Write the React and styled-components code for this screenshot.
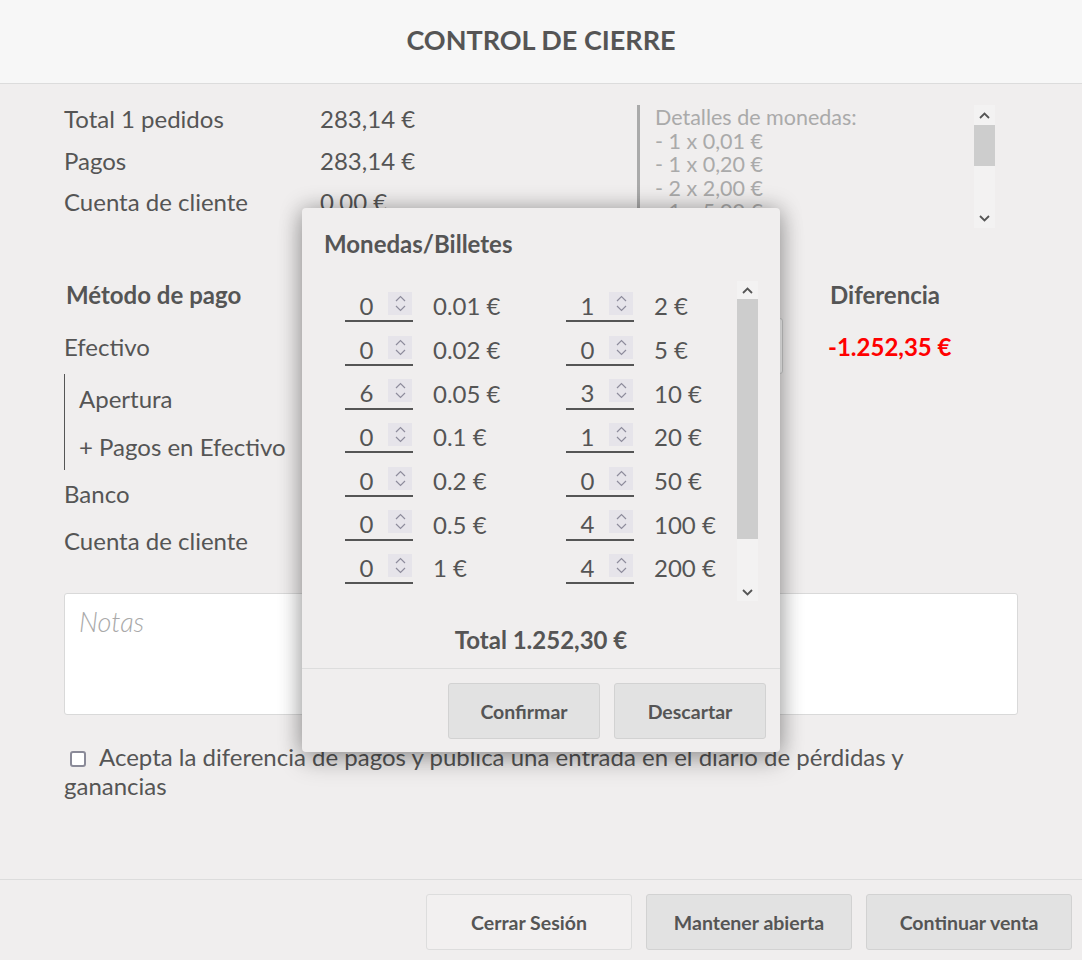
import React from "react";
import styled, { createGlobalStyle } from "styled-components";

const GlobalStyle = createGlobalStyle`
  body {
    margin: 0;
    background-color: #f0eeee;
    font-family: Lato, "Open Sans", sans-serif;
    color: #555555;
  }
`;

const Screen = styled.div`
  position: relative;
  width: 1082px;
  height: 960px;
  display: flex;
  flex-direction: column;
  background-color: #f0eeee;
  overflow: hidden;
`;

const Header = styled.header`
  height: 84px;
  flex-shrink: 0;
  box-sizing: border-box;
  padding-bottom: 4px;
  display: flex;
  align-items: center;
  justify-content: center;
  background-color: #f7f7f7;
  border-bottom: 1px solid #dcdcdc;
`;

const Title = styled.h1`
  margin: 0;
  font-size: 27px;
  font-weight: 700;
  color: #555555;
`;

const Body = styled.main`
  flex: 1;
  padding: 14px 64px 0;
  font-size: 24px;
`;

const Summary = styled.section`
  display: flex;
  justify-content: space-between;
  height: 135px;
`;

const Totals = styled.div`
  display: grid;
  grid-template-columns: 256px 200px;
  grid-auto-rows: 41.5px;
  align-items: center;
`;

const CoinDetails = styled.div`
  display: flex;
  width: 355px;
  height: 123px;
  margin-top: 7px;
  margin-right: 23px;
  border-left: 3px solid #aaaaaa;
`;

const CoinText = styled.div`
  flex: 1;
  overflow: hidden;
  padding: 1px 0 0 15px;
  font-size: 21.5px;
  line-height: 23.5px;
  color: #aaaaaa;
  white-space: nowrap;
`;

const ScrollTrack = styled.div`
  width: 21px;
  flex-shrink: 0;
  display: flex;
  flex-direction: column;
  align-items: center;
  background-color: #f3f2f2;
`;

const ScrollArrow = styled.div`
  height: ${(p) => p.$size}px;
  width: 100%;
  flex-shrink: 0;
  display: flex;
  align-items: center;
  justify-content: center;
`;

const ScrollThumb = styled.div`
  width: 100%;
  height: ${(p) => p.$height}px;
  flex-shrink: 0;
  background-color: #cdcdcd;
`;

const ScrollGap = styled.div`
  flex: 1;
`;

const PaymentTable = styled.div`
  display: grid;
  grid-template-columns: 256px 250px 258px 1fr;
  margin-top: 35px;
`;

const HeadCell = styled.div`
  font-weight: 700;
  height: 52px;
  display: flex;
  align-items: center;
  padding-left: 2px;
`;

const Cell = styled.div`
  height: ${(p) => p.$h || 47}px;
  display: flex;
  align-items: center;
  color: ${(p) => (p.$red ? "#ff0000" : "#555555")};
  font-weight: ${(p) => (p.$red ? 700 : 400)};
`;

const CountInput = styled.div`
  width: 211px;
  height: 54px;
  border: 1px solid #cfcfcf;
  border-radius: 3px;
  background-color: #ffffff;
`;

const CashGroup = styled.div`
  grid-column: 1 / -1;
  display: flex;
  flex-direction: column;
  border-left: 1px solid #555555;
  padding-left: 14px;
  margin-top: 2px;
`;

const SubRow = styled.div`
  height: 48px;
  display: flex;
  align-items: center;
`;

const Notes = styled.textarea`
  display: block;
  box-sizing: border-box;
  width: 954px;
  height: 122px;
  margin-top: 29px;
  padding: 11px 14px;
  resize: none;
  border: 1px solid #d9d9d9;
  border-radius: 3px;
  background-color: #ffffff;
  font-family: Lato, sans-serif;
  font-size: 27px;
  color: #555555;

  &::placeholder {
    color: #a9a9a9;
    font-style: italic;
    font-weight: 300;
  }
`;

const AcceptLabel = styled.label`
  display: block;
  margin-top: 27px;
  width: 880px;
  font-size: 24px;
  line-height: 29px;
`;

const CheckBox = styled.input`
  appearance: none;
  width: 16px;
  height: 16px;
  margin: 0 13px 0 6px;
  vertical-align: -1px;
  border: 2px solid #8a8a98;
  border-radius: 3px;
  background-color: #ffffff;
  box-sizing: border-box;
`;

const Footer = styled.footer`
  height: 81px;
  flex-shrink: 0;
  display: flex;
  justify-content: flex-end;
  gap: 14px;
  padding: 14px 10px 0 0;
  box-sizing: border-box;
  border-top: 1px solid #dcdcdc;
`;

const Button = styled.button`
  width: ${(p) => p.$width}px;
  height: 56px;
  padding: 0;
  border: 1px solid ${(p) => (p.$light ? "#dddddd" : "#d2d2d2")};
  border-radius: 3px;
  background-color: ${(p) => (p.$light ? "#f2f0f0" : "#e2e2e2")};
  font-family: Lato, sans-serif;
  font-size: 19.5px;
  font-weight: 700;
  color: #555555;
`;

const Popup = styled.div`
  position: absolute;
  left: 302px;
  top: 208px;
  width: 478px;
  height: 544px;
  display: flex;
  flex-direction: column;
  background-color: #f0eeee;
  border-radius: 4px;
  box-shadow: 0 0 22px rgba(0, 0, 0, 0.3), 0 10px 26px rgba(0, 0, 0, 0.2);
`;

const PopupTitle = styled.h2`
  margin: 0;
  padding: 21px 22px 0;
  height: 52px;
  font-size: 24px;
  font-weight: 700;
  color: #555555;
`;

const CoinArea = styled.div`
  display: flex;
  height: 320px;
  margin: 0 22px 0 43px;
`;

const CoinGrid = styled.div`
  flex: 1;
  display: grid;
  grid-template-columns: 221px 1fr;
  grid-auto-rows: 43.7px;
  align-content: start;
  padding-top: 3px;
`;

const CoinRow = styled.div`
  display: flex;
  align-items: center;
  gap: 20px;
  font-size: 24px;
`;

const CoinInput = styled.div`
  width: 68px;
  height: 32px;
  display: flex;
  align-items: center;
  box-sizing: border-box;
  border-bottom: 2px solid #555555;
  margin-top: 1px;
`;

const CoinValue = styled.span`
  width: 43px;
  text-align: center;
  font-size: 24px;
`;

const Spinner = styled.span`
  width: 24px;
  height: 23px;
  margin-top: -4px;
  display: flex;
  align-items: center;
  justify-content: center;
  background-color: #e6e4ea;
`;

const PopupTotal = styled.div`
  height: 68px;
  box-sizing: border-box;
  padding-top: 10px;
  display: flex;
  align-items: center;
  justify-content: center;
  font-size: 24px;
  font-weight: 700;
  border-bottom: 1px solid #dddddd;
`;

const PopupFooter = styled.div`
  display: flex;
  justify-content: flex-end;
  gap: 14px;
  padding: 14px 14px 0 0;
`;

const Chevron = ({ up, color = "#555" }) => (
  <svg width="11" height="7" viewBox="0 0 11 7">
    <path
      d={up ? "M1 6 L5.5 1.5 L10 6" : "M1 1 L5.5 5.5 L10 1"}
      fill="none"
      stroke={color}
      strokeWidth="1.8"
    />
  </svg>
);

const SpinIcon = () => (
  <svg width="11" height="17" viewBox="0 0 11 17">
    <path d="M1 6 L5.5 1.5 L10 6" fill="none" stroke="#8e8c9c" strokeWidth="1.2" />
    <path d="M1 11 L5.5 15.5 L10 11" fill="none" stroke="#8e8c9c" strokeWidth="1.2" />
  </svg>
);

const FakeScrollbar = ({ arrow, thumbTop, thumbHeight }) => (
  <ScrollTrack>
    <ScrollArrow $size={arrow}>
      <Chevron up />
    </ScrollArrow>
    <ScrollGap style={{ flex: `0 0 ${thumbTop}px` }} />
    <ScrollThumb $height={thumbHeight} />
    <ScrollGap />
    <ScrollArrow $size={arrow}>
      <Chevron />
    </ScrollArrow>
  </ScrollTrack>
);

const coins = [
  ["0", "0.01 €", "1", "2 €"],
  ["0", "0.02 €", "0", "5 €"],
  ["6", "0.05 €", "3", "10 €"],
  ["0", "0.1 €", "1", "20 €"],
  ["0", "0.2 €", "0", "50 €"],
  ["0", "0.5 €", "4", "100 €"],
  ["0", "1 €", "4", "200 €"],
];

const CoinField = ({ qty, label }) => (
  <CoinRow>
    <CoinInput>
      <CoinValue>{qty}</CoinValue>
      <Spinner>
        <SpinIcon />
      </Spinner>
    </CoinInput>
    <span>{label}</span>
  </CoinRow>
);

export default function App() {
  return (
    <Screen>
      <GlobalStyle />
      <Header>
        <Title>CONTROL DE CIERRE</Title>
      </Header>

      <Body>
        <Summary>
          <Totals>
            <span>Total 1 pedidos</span>
            <span>283,14 €</span>
            <span>Pagos</span>
            <span>283,14 €</span>
            <span>Cuenta de cliente</span>
            <span>0,00 €</span>
          </Totals>
          <CoinDetails>
            <CoinText>
              Detalles de monedas:
              <br />- 1 x 0,01 €
              <br />- 1 x 0,20 €
              <br />- 2 x 2,00 €
              <br />- 1 x 5,00 €
              <br />- 1 x 10,00 €
            </CoinText>
            <FakeScrollbar arrow={20} thumbTop={0} thumbHeight={41} />
          </CoinDetails>
        </Summary>

        <PaymentTable>
          <HeadCell>Método de pago</HeadCell>
          <HeadCell>Esperado</HeadCell>
          <HeadCell>Contado</HeadCell>
          <HeadCell>Diferencia</HeadCell>

          <Cell $h={52}>Efectivo</Cell>
          <Cell $h={52}>1.252,35 €</Cell>
          <Cell $h={52}>
            <CountInput />
          </Cell>
          <Cell $h={52} $red>
            -1.252,35 €
          </Cell>

          <CashGroup>
            <SubRow>Apertura</SubRow>
            <SubRow>+ Pagos en Efectivo</SubRow>
          </CashGroup>

          <Cell>Banco</Cell>
          <Cell>283,14 €</Cell>
          <Cell />
          <Cell />

          <Cell>Cuenta de cliente</Cell>
          <Cell>0,00 €</Cell>
          <Cell />
          <Cell />
        </PaymentTable>

        <Notes placeholder="Notas" />

        <AcceptLabel>
          <CheckBox type="checkbox" />
          Acepta la diferencia de pagos y publica una entrada en el diario de
          pérdidas y ganancias
        </AcceptLabel>
      </Body>

      <Footer>
        <Button $width={206} $light>
          Cerrar Sesión
        </Button>
        <Button $width={206}>Mantener abierta</Button>
        <Button $width={206}>Continuar venta</Button>
      </Footer>

      <Popup>
        <PopupTitle>Monedas/Billetes</PopupTitle>
        <CoinArea>
          <CoinGrid>
            {coins.map(([q1, l1, q2, l2]) => (
              <React.Fragment key={l1}>
                <CoinField qty={q1} label={l1} />
                <CoinField qty={q2} label={l2} />
              </React.Fragment>
            ))}
          </CoinGrid>
          <FakeScrollbar arrow={18} thumbTop={0} thumbHeight={240} />
        </CoinArea>
        <PopupTotal>Total 1.252,30 €</PopupTotal>
        <PopupFooter>
          <Button $width={152}>Confirmar</Button>
          <Button $width={152}>Descartar</Button>
        </PopupFooter>
      </Popup>
    </Screen>
  );
}
